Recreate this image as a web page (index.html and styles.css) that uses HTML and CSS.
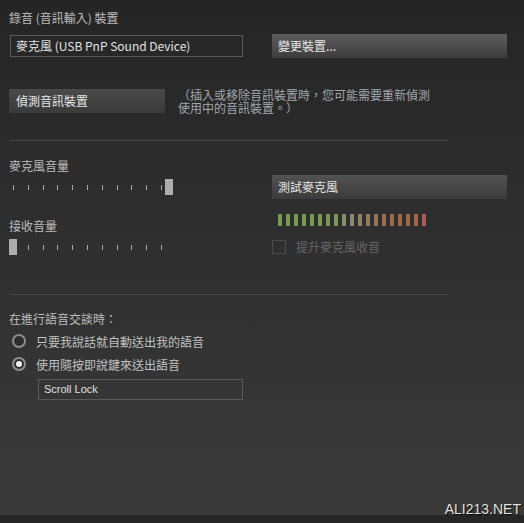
FILE: index.html
```html
<!DOCTYPE html>
<html lang="zh-Hant">
<head>
<meta charset="utf-8">
<title>錄音裝置設定</title>
<link rel="stylesheet" href="styles.css">
</head>
<body>
<div class="page">
  <section class="device">
    <div class="title">錄音 (音訊輸入) 裝置</div>
    <div class="cols row1">
      <div class="field device-field">麥克風 (USB PnP Sound Device)</div>
      <div class="btn btn-light">變更裝置...</div>
    </div>
    <div class="row2">
      <div class="btn detect">偵測音訊裝置</div>
      <p class="help">（插入或移除音訊裝置時，您可能需要重新偵測<br>使用中的音訊裝置。）</p>
    </div>
  </section>
  <hr class="sep">
  <section class="cols volume">
    <div class="col-left">
      <div class="label">麥克風音量</div>
      <div class="slider">
        <div class="ticks"><i></i><i></i><i></i><i></i><i></i><i></i><i></i><i></i><i></i><i></i><i></i></div>
        <div class="thumb" style="left:156px"></div>
      </div>
      <div class="label label2">接收音量</div>
      <div class="slider">
        <div class="ticks"><i></i><i></i><i></i><i></i><i></i><i></i><i></i><i></i><i></i><i></i><i></i></div>
        <div class="thumb" style="left:0px"></div>
      </div>
    </div>
    <div class="col-right">
      <div class="btn">測試麥克風</div>
      <div class="meter"><i></i><i></i><i></i><i></i><i></i><i></i><i></i><i></i><i></i><i></i><i></i><i></i><i></i><i></i><i></i><i></i><i></i><i></i><i></i></div>
      <div class="check"><span class="box"></span><span>提升麥克風收音</span></div>
    </div>
  </section>
  <hr class="sep sep2">
  <section class="voice">
    <div class="label">在進行語音交談時：</div>
    <div class="radio-row first"><span class="radio"></span><span>只要我說話就自動送出我的語音</span></div>
    <div class="radio-row"><span class="radio on"></span><span>使用隨按即說鍵來送出語音</span></div>
    <div class="field key-field">Scroll Lock</div>
  </section>
</div>
<div class="footer"></div>
<div class="watermark">ALI213.NET</div>
</body>
</html>
```
FILE: styles.css
```css
html, body { margin: 0; padding: 0; }
body {
  width: 524px;
  height: 523px;
  display: flex;
  flex-direction: column;
  position: relative;
  overflow: hidden;
  background: #262626;
  font-family: "Noto Sans CJK TC", "Liberation Sans", sans-serif;
  font-size: 12px;
  color: #bdbdbd;
}
.page {
  flex: 1;
  padding: 10px 17px 0 9px;
  background: linear-gradient(#252525, #3a3a3a);
}
.footer { height: 8px; background: #262626; }

.title, .label { line-height: 16px; }

.cols {
  display: grid;
  grid-template-columns: 234px 235px;
  column-gap: 29px;
}
.row1 { margin-top: 8px; align-items: center; height: 24px; }

.field {
  box-sizing: border-box;
  border: 1px solid #5a5a5a;
  color: #e2e2e2;
}
.device-field {
  margin-left: 1px;
  width: 233px;
  height: 22px;
  line-height: 20px;
  padding: 0 5px;
}

.btn {
  box-sizing: border-box;
  height: 24px;
  line-height: 24px;
  padding-left: 6px;
  color: #e6e6e6;
  background: linear-gradient(#525252, #3b3b3b);
}
.btn-light { background: linear-gradient(#5e5e5e, #3c3c3c); }

.row2 {
  display: flex;
  align-items: center;
  gap: 13px;
  margin-top: 30px;
}
.detect {
  width: 156px;
  padding-left: 7px;
  background: linear-gradient(#4a4a4a, #3a3a3a);
}
.help {
  margin: 0;
  line-height: 13px;
  color: #a0a7ad;
}

.sep {
  border: 0;
  height: 1px;
  width: 439px;
  margin: 26px 0 0;
  background: #464646;
}
.sep2 { margin-top: 39px; }

.col-left { padding-top: 17px; }
.col-right { padding-top: 34px; }

.slider {
  position: relative;
  width: 164px;
  height: 16px;
  margin-top: 5px;
}
.ticks {
  display: flex;
  justify-content: space-between;
  width: 149px;
  height: 5px;
  margin-left: 4px;
  padding-top: 6px;
}
.ticks i { width: 1px; height: 5px; background: #a8a8a8; }
.thumb {
  position: absolute;
  top: 0;
  width: 8px;
  height: 16px;
  background: #adadad;
}
.label2 { margin-top: 23px; }

.meter {
  display: flex;
  gap: 4px;
  padding-left: 6px;
  margin-top: 15px;
}
.meter i { width: 4px; height: 12px; background: #7a9a4f; }
.meter i:nth-child(7) { background: #7e9655; }
.meter i:nth-child(8) { background: #82935c; }
.meter i:nth-child(9) { background: #868f66; }
.meter i:nth-child(10) { background: #8a8a70; }
.meter i:nth-child(11) { background: #8c826a; }
.meter i:nth-child(12) { background: #917a5e; }
.meter i:nth-child(13) { background: #977256; }
.meter i:nth-child(14) { background: #9b6d50; }
.meter i:nth-child(15) { background: #9f694b; }
.meter i:nth-child(16) { background: #a26747; }
.meter i:nth-child(17) { background: #a46545; }
.meter i:nth-child(18) { background: #a56443; }
.meter i:nth-child(19) { background: #ad5a58; }

.check {
  display: flex;
  align-items: center;
  gap: 10px;
  margin-top: 14px;
  line-height: 14px;
  color: #676767;
}
.box {
  box-sizing: border-box;
  width: 14px;
  height: 14px;
  border: 1px solid #4c4c4c;
}

.voice { padding-top: 16px; }
.radio-row {
  display: flex;
  align-items: center;
  gap: 10px;
  height: 16px;
  margin-top: 7px;
  padding-left: 3px;
  color: #c2c2c2;
}
.radio-row.first { margin-top: 6px; }
.radio {
  box-sizing: border-box;
  width: 14px;
  height: 14px;
  border-radius: 50%;
  border: 2px solid #8e8e8e;
  background: #2e2e2e;
  display: flex;
  align-items: center;
  justify-content: center;
}
.radio.on::after {
  content: "";
  width: 6px;
  height: 6px;
  border-radius: 50%;
  background: #f2f2f2;
}
.key-field {
  margin: 7px 0 0 29px;
  width: 205px;
  height: 21px;
  line-height: 19px;
  padding-left: 5px;
  font-family: "Liberation Sans", sans-serif;
  font-size: 11px;
}

.watermark {
  position: absolute;
  right: 3px;
  bottom: 7px;
  font-family: "Liberation Sans", sans-serif;
  font-size: 14px;
  line-height: 14px;
  color: #e2e2e2;
  text-shadow: 1px 1px 1px #000;
}
```
